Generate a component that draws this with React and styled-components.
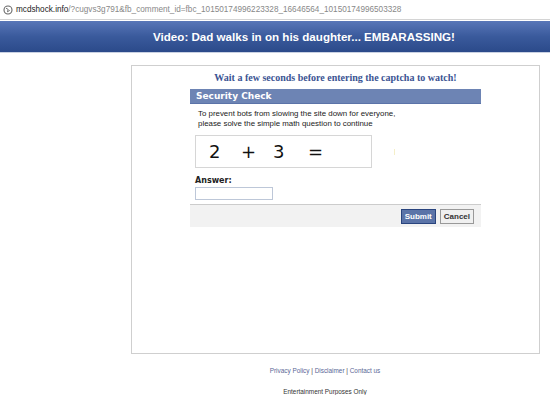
import React from "react";
import styled, { createGlobalStyle } from "styled-components";

const GlobalStyle = createGlobalStyle`
  body {
    margin: 0;
    background: #ffffff;
    font-family: "DejaVu Sans", Verdana, sans-serif;
  }
`;

export default function App() {
  return (
    <>
      <GlobalStyle />
      <AddressBar>
        <GlobeIcon viewBox="0 0 10 10">
          <circle cx="5" cy="5" r="4" fill="none" stroke="#666" strokeWidth="1.1" />
          <path d="M3 3.2 L5.2 4.4 L4.4 6.8 L6.8 5.4" fill="none" stroke="#666" strokeWidth="0.9" />
        </GlobeIcon>
        <Domain>mcdshock.info</Domain>
        <Path>/?cugvs3g791&amp;fb_comment_id=fbc_10150174996223328_16646564_10150174996503328</Path>
      </AddressBar>
      <Header>Video: Dad walks in on his daughter... EMBARASSING!</Header>
      <Main>
        <Title>Wait a few seconds before entering the captcha to watch!</Title>
        <Panel>
          <PanelHead>Security Check</PanelHead>
          <PanelBody>
            <Intro>
              To prevent bots from slowing the site down for everyone,
              <br />
              please solve the simple math question to continue
            </Intro>
            <CaptchaRow>
              <Captcha>
                <Glyph>2</Glyph>
                <Glyph>+</Glyph>
                <Glyph $wide>3</Glyph>
                <Glyph>=</Glyph>
              </Captcha>
              <Speck />
            </CaptchaRow>
            <Label>Answer:</Label>
            <AnswerInput type="text" />
          </PanelBody>
          <PanelFoot>
            <SubmitButton>Submit</SubmitButton>
            <CancelButton>Cancel</CancelButton>
          </PanelFoot>
        </Panel>
      </Main>
      <Footer>
        <Links>
          <Link>Privacy Policy</Link> | <Link>Disclaimer</Link> | <Link>Contact us</Link>
        </Links>
        <Note>Entertainment Purposes Only</Note>
      </Footer>
    </>
  );
}

const AddressBar = styled.div`
  display: flex;
  align-items: center;
  height: 19px;
  padding-left: 3px;
  border-bottom: 1px solid #d4d4d4;
  font-family: "Liberation Sans", Arial, sans-serif;
  font-size: 8.2px;
  white-space: nowrap;
  overflow: hidden;
`;

const GlobeIcon = styled.svg`
  width: 10px;
  height: 10px;
  margin-right: 3px;
`;

const Domain = styled.span`
  color: #222;
`;

const Path = styled.span`
  color: #888;
`;

const Header = styled.div`
  height: 31px;
  margin-top: 1px;
  display: flex;
  align-items: center;
  justify-content: center;
  padding-left: 58px;
  background: linear-gradient(#5876b8, #3a5a9c 50%, #2b4a8a);
  border-bottom: 1px solid #c9d1e2;
  color: #ffffff;
  font-family: "Liberation Sans", Tahoma, sans-serif;
  font-weight: bold;
  font-size: 11.6px;
`;

const Main = styled.div`
  margin: 12px 0 0 131px;
  width: 407px;
  height: 282px;
  border: 1px solid #cfcfcf;
  padding-top: 5px;
`;

const Title = styled.div`
  text-align: center;
  font-family: "Liberation Serif", "Times New Roman", serif;
  font-weight: bold;
  font-size: 10px;
  color: #3b5493;
  height: 18px;
  line-height: 14px;
`;

const Panel = styled.div`
  margin-left: 58px;
  width: 291px;
`;

const PanelHead = styled.div`
  height: 14px;
  line-height: 14px;
  padding-left: 6px;
  background: #6d84b4;
  border-bottom: 1px solid #5b73a8;
  color: #ffffff;
  font-family: "DejaVu Sans", Tahoma, sans-serif;
  font-weight: bold;
  font-size: 9px;
`;

const PanelBody = styled.div`
  padding: 5px 0 4px 5px;
`;

const Intro = styled.div`
  padding-left: 3px;
  font-family: "Liberation Sans", Tahoma, sans-serif;
  font-size: 7.9px;
  line-height: 10px;
  color: #222;
`;

const CaptchaRow = styled.div`
  display: flex;
  align-items: center;
  margin-top: 6px;
`;

const Captcha = styled.div`
  display: flex;
  align-items: center;
  padding-left: 13px;
  box-sizing: border-box;
  width: 177px;
  height: 33px;
  border: 1px solid #d6d6d6;
  font-family: "DejaVu Sans", Verdana, sans-serif;
  font-size: 18px;
  color: #111;
`;

const Glyph = styled.span`
  width: ${(props) => (props.$wide ? "35px" : "32px")};
`;

const Speck = styled.span`
  width: 1px;
  height: 6px;
  margin-left: 22px;
  background: #f5efc8;
`;

const Label = styled.div`
  margin-top: 8px;
  font-family: "DejaVu Sans", Tahoma, sans-serif;
  font-weight: bold;
  font-size: 8px;
  color: #222;
`;

const AnswerInput = styled.input`
  display: block;
  margin-top: 2px;
  width: 78px;
  height: 13px;
  padding: 0;
  box-sizing: border-box;
  border: 1px solid #bdc7d8;
`;

const PanelFoot = styled.div`
  display: flex;
  justify-content: flex-end;
  gap: 4px;
  padding: 4px 7px 0 0;
  box-sizing: border-box;
  height: 23px;
  background: #f2f2f2;
  border-top: 1px solid #cccccc;
`;

const SubmitButton = styled.button`
  height: 15px;
  padding: 0 3px;
  background: #5b74a8;
  border: 1px solid #29447e;
  color: #ffffff;
  font-family: "Liberation Sans", Tahoma, sans-serif;
  font-weight: bold;
  font-size: 8px;
`;

const CancelButton = styled(SubmitButton)`
  background: #f0f0f0;
  border: 1px solid #999999;
  color: #333333;
`;

const Footer = styled.div`
  margin-left: 120px;
  width: 410px;
  text-align: center;
  font-family: "Liberation Sans", Tahoma, sans-serif;
  font-size: 6.4px;
`;

const Links = styled.div`
  margin-top: 13px;
  color: #444;
`;

const Link = styled.span`
  color: #5a6796;
`;

const Note = styled.div`
  margin-top: 14px;
  color: #333;
`;
